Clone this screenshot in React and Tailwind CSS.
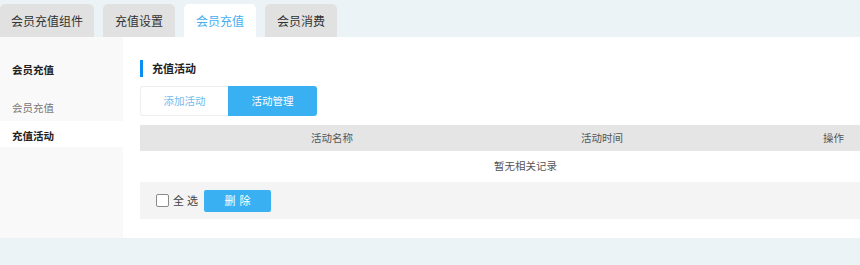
import React, { useState } from "react";

const tabs = ["会员充值组件", "充值设置", "会员充值", "会员消费"];

const App = () => {
  const [activeTab, setActiveTab] = useState(2);
  const [checked, setChecked] = useState(false);

  return (
    <div className="w-[860px] h-[265px] bg-[#ecf3f7] overflow-hidden font-['Noto_Sans_CJK_SC',sans-serif]">
      {/* Tabs */}
      <div className="flex gap-[9px] pt-1 h-[37px]">
        {tabs.map((t, i) => (
          <button
            key={t}
            onClick={() => setActiveTab(i)}
            className={`h-[33px] rounded-t-[5px] text-[12px] leading-[33px] text-center ${
              i === 0 ? "w-[94px]" : "w-[72px]"
            } ${i === activeTab ? "bg-white text-[#45aff0]" : "bg-[#e1e1e1] text-[#333]"}`}
          >
            {t}
          </button>
        ))}
      </div>

      {/* Body */}
      <div className="flex h-[201px]">
        {/* Sidebar */}
        <div className="w-[123px] bg-[#f9f9f9] pt-[25px]">
          <div className="px-3 text-[10.5px] leading-4 font-bold text-[#222]">会员充值</div>
          <div className="mt-[17px] px-3 h-[26px] leading-[26px] text-[10.5px] text-[#777]">会员充值</div>
          <div className="px-3 h-[26px] leading-[29px] text-[10.5px] font-bold text-[#222] bg-white">充值活动</div>
        </div>

        {/* Main */}
        <div className="flex-1 bg-white pl-[17px] pt-[23px] overflow-hidden">
          <div className="flex items-center h-[17px]">
            <span className="w-[3px] h-[17px] bg-[#0b8ef2]" />
            <span className="ml-[9px] text-[11px] font-bold text-[#222]">充值活动</span>
          </div>

          <div className="flex mt-[9px] h-[30px] w-[177px]">
            <button className="w-[88px] border border-[#eeeeee] border-r-0 rounded-l-[3px] text-[10.5px] text-[#6fbcee] bg-white">
              添加活动
            </button>
            <button className="w-[89px] rounded-r-[3px] text-[10.5px] text-white bg-[#38b0f1]">
              活动管理
            </button>
          </div>

          {/* Table */}
          <div className="mt-[9px] text-[10.5px]">
            <div className="grid grid-cols-[384px_156px_1fr] h-[26px] leading-[26px] bg-[#e5e5e5] text-[#555]">
              <div className="text-center">活动名称</div>
              <div className="text-center">活动时间</div>
              <div className="text-right pr-[16px]">操作</div>
            </div>
            <div className="h-[31px] leading-[29px] pl-[354px] text-[#555]">暂无相关记录</div>
            <div className="flex items-center h-[37px] bg-[#f4f4f4] pl-4">
              <label className="flex items-center cursor-pointer text-[#444] text-[11px]">
                <input
                  type="checkbox"
                  checked={checked}
                  onChange={() => setChecked(!checked)}
                  className="appearance-none w-[13px] h-[13px] m-0 border border-[#8a8a8a] rounded-[2px] bg-white checked:bg-[#38b0f1] checked:border-[#38b0f1]"
                />
                <span className="ml-[4px] tracking-[3px]">全选</span>
              </label>
              <button className="ml-[3px] w-[67px] h-[22px] rounded-[2px] bg-[#38b0f1] text-white text-[11px] tracking-[4px] pl-1">
                删除
              </button>
            </div>
          </div>
        </div>
      </div>
    </div>
  );
};

export default App;
